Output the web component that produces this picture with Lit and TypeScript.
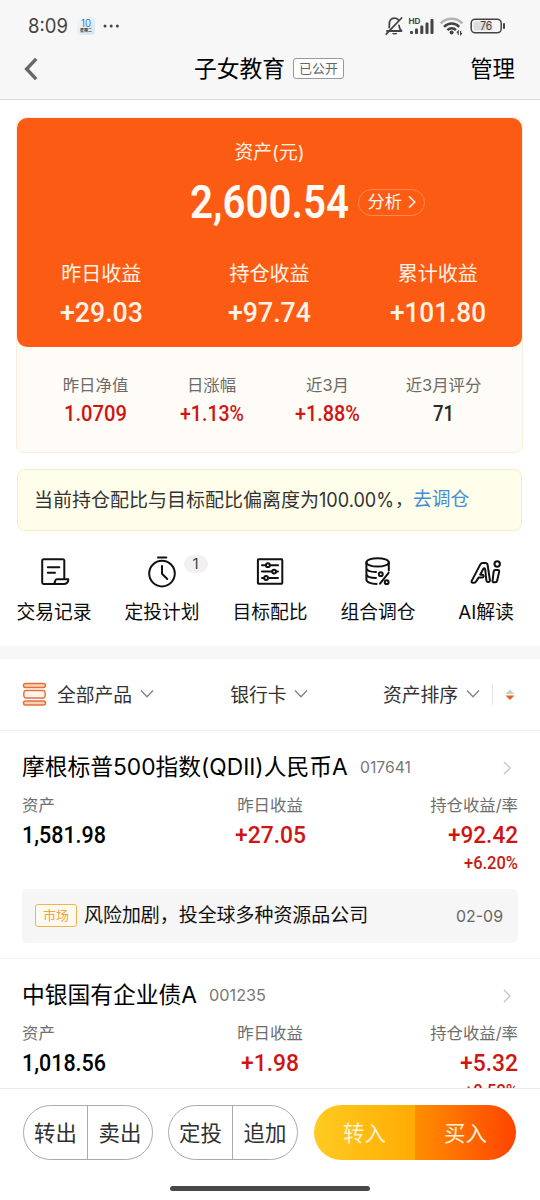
import { LitElement, html, svg, css } from "lit";
import { customElement, property } from "lit/decorators.js";

/** A figure set to an exact width, with its capitals centred in the box. */
@customElement("fit-figure")
class FitFigure extends LitElement {
  @property() text = "";
  @property({ type: Number }) w = 50;
  @property({ type: Number }) size = 20;
  @property() face = "din";

  static styles = css`
    :host { display: block; flex: none; line-height: 0; }
    svg { display: block; overflow: visible; fill: currentColor; }
    .din { font-family: Roboto, "Liberation Sans", sans-serif; font-weight: 500; }
    .bold { font-family: Roboto, "Liberation Sans", sans-serif; font-weight: 600; }
    .round { font-family: Inter, "Noto Sans", sans-serif; font-weight: 400; }
  `;

  render() {
    const h = Math.round(this.size * 0.8);
    return html`<svg width=${this.w} height=${h}>
      <text class=${this.face} x="0" y=${h / 2 + this.size * 0.358} font-size=${this.size}
        textLength=${this.w} lengthAdjust="spacingAndGlyphs">${this.text}</text>
    </svg>`;
  }
}

const fig = (text: string, w: number, size: number, face = "din") =>
  html`<fit-figure .text=${text} .w=${w} .size=${size} .face=${face}></fit-figure>`;

const icons = {
  records: svg`
    <path d="M5.6 28 A1.6 1.6 0 0 1 4.2 26.4 V4.6 A1.3 1.3 0 0 1 5.5 3.3 H25 A1.3 1.3 0 0 1 26.3 4.6 V22.8 M5.6 28 H25.5 C28.6 28 30.3 26.3 30.3 23.2 H18.6 C17.6 23.2 17.4 24 17.2 25 C16.9 26.8 16 28 14.6 28"/>
    <path d="M9.8 11.3H21.3M9.8 16.8H17"/>`,
  clock: svg`<circle cx="16" cy="17.6" r="12.8"/><path d="M12 1.4H20.3M16 10V17.8L21.3 23"/>`,
  sliders: svg`
    <rect x="3.9" y="3.3" width="24.4" height="24.4" rx=".6"/>
    <path d="M8 9.2H11.8M16 9.2H24M8 15.6H18M22.2 15.6H24M8 22H10M14.2 22H24"/>
    <circle cx="13.9" cy="9.2" r="1.9"/><circle cx="20.1" cy="15.6" r="1.9"/><circle cx="12.1" cy="22" r="1.9"/>`,
  coins: svg`
    <ellipse cx="15.6" cy="6.4" rx="11.2" ry="4.2"/>
    <path d="M4.4 6.4V23.6C4.4 26 8.5 28 14.6 28.1M26.8 6.4V14.6M4.4 12C4.6 14.6 9 16 14 16M4.4 17.8C4.6 20.4 9 21.9 14 21.9M26.6 16.8L18 27.6"/>
    <circle cx="18.8" cy="18.2" r="1.9"/><circle cx="24.7" cy="26.2" r="1.9"/>`,
  ai: svg`
    <path d="M1.7 24.9 L10.2 8.6 C10.8 7.4 11.6 6.9 12.8 6.9 H15.4 C16.8 6.9 17.4 7.6 17.6 8.8 L19.9 24.2 C20.1 26.4 16.8 26.6 16.4 24.6 L15.2 13.3 C15 11.8 13.9 11.8 13.2 13 L10.2 18.7 H12.2 C14 18.7 14.1 21.6 12.2 21.6 H8.6 L6.3 25.3 C5.7 26.4 5 26.7 4 26.7 H2.8 C1.7 26.7 1.2 25.9 1.7 24.9Z"/>
    <circle cx="27.2" cy="8" r="2.7"/>
    <path d="M25.2 13.9H27.5C28.9 13.9 29.4 14.6 29.1 15.9L27.2 24.5C26.9 25.8 26.4 26.3 25.2 26.3H24.2C22.8 26.3 22.3 25.6 22.6 24.3L23.7 15.4C23.9 14.4 24.3 13.9 25.2 13.9Z"/>`,
};

interface Fund {
  name: string;
  code: string;
  codeW: number;
  asset: string;
  day: string;
  dayW: number;
  hold: string;
  holdW: number;
  rate: string;
}

const funds: Fund[] = [
  { name: "摩根标普500指数(QDII)人民币A", code: "017641", codeW: 51, asset: "1,581.98", day: "+27.05", dayW: 71, hold: "+92.42", holdW: 70, rate: "+6.20%" },
  { name: "中银国有企业债A", code: "001235", codeW: 57, asset: "1,018.56", day: "+1.98", dayW: 58, hold: "+5.32", holdW: 58, rate: "+0.52%" },
];

@customElement("app-root")
class AppRoot extends LitElement {
  static styles = css`
    :host {
      display: block;
      width: 540px;
      height: 1200px;
      overflow: hidden;
      background: #fff;
      color: #111;
      font-family: Inter, "Noto Sans CJK SC", sans-serif;
      font-size: 18.8px;
      line-height: 1;
      white-space: nowrap;
    }
    * { box-sizing: border-box; }
    svg { display: block; flex: none; }
    .page { display: flex; flex-direction: column; height: 1200px; }
    .head { height: 100px; flex: none; background: #f7f7f7; border-bottom: 1.5px solid #dcdcdc; }
    .status { display: flex; align-items: center; height: 52px; padding: 0 34px 0 28px; color: #444; }
    .cal { display: flex; flex-direction: column; align-items: center; justify-content: space-evenly; width: 18px; height: 18px; margin: 0 8px 0 9px; border-radius: 4px; background: linear-gradient(135deg, #f3f8fc, #d5e5f0); color: #3a78bd; }
    .cal-day { font-size: 4px; font-weight: 700; color: #333; }
    .signals { display: flex; align-items: center; margin-left: auto; }
    .nav { display: grid; grid-template-columns: 1fr auto 1fr; align-items: center; height: 34px; padding: 0 25px 0 23px; color: #000; }
    .title { display: flex; align-items: center; gap: 8px; font-size: 22.8px; }
    .open { padding: 0 5px; height: 21px; line-height: 18px; border: 1px solid #999; border-radius: 3px; background: #fff; color: #666; font-size: 13px; }
    .manage { justify-self: end; font-size: 22.4px; }

    .card { flex: none; margin: 17px 17px 0 16px; height: 336px; border: 1px solid #fbeedd; border-radius: 8px; background: #fffbf6; }
    .hero { height: 229px; border-radius: 10px; background: #fc5b14; color: #fff3e6; }
    .hero-label { height: 65px; line-height: 69px; text-align: center; font-size: 18.8px; }
    .hero-amount { display: grid; grid-template-columns: 1fr 160px 1fr; align-items: center; height: 35px; color: #fffaf3; }
    .amount { grid-column: 2; }
    .analyse { display: flex; align-items: center; justify-self: start; gap: 6px; width: 67px; height: 27px; margin: 2px 0 0 8px; padding: 0 0 2px 9px; border: 1px solid #fd8a52; border-radius: 14px; font-size: 17.2px; }
    .gains { display: grid; grid-template-columns: repeat(3, 1fr); padding-top: 41px; }
    .cell { display: flex; flex-direction: column; align-items: center; }
    .gain-label { height: 30px; line-height: 30px; font-size: 20px; margin-bottom: 11px; }
    .stats { display: grid; grid-template-columns: repeat(4, 116px); justify-content: center; padding-top: 28px; }
    .stat-label { height: 20px; line-height: 20px; margin-bottom: 9px; color: #6d6a67; font-size: 16.4px; }
    .red { color: #cf1512; }
    .dark { color: #292929; }

    .notice { flex: none; display: flex; align-items: center; height: 62px; margin: 16px 18px 0 17px; padding-left: 16px; border: 1.5px solid #f3eec0; border-radius: 8px; background: #fffeea; color: #333; font-size: 19px; }
    .link { color: #458bdb; font-size: 18.8px; padding-top: 1px; }
    .notice-comma { font-size: 18px; margin-left: 1px; }

    .actions { flex: none; display: grid; grid-template-columns: repeat(5, 108px); height: 115px; padding-top: 25px; color: #0c0c0c; }
    .action { position: relative; display: flex; flex-direction: column; align-items: center; }
    .action-label { height: 20px; line-height: 20px; margin-top: 15px; }
    .glyph { fill: none; stroke: #111; stroke-width: 2; stroke-linecap: round; stroke-linejoin: round; }
    .badge { position: absolute; left: 75.5px; top: -1px; width: 24px; height: 18px; border-radius: 9px; background: #f1f1f1; color: #444; font-size: 15px; line-height: 18px; text-align: center; }
    .band { flex: none; height: 13px; background: #f7f7f7; }

    .filters { flex: none; display: flex; align-items: center; height: 72px; padding: 0 25px 0 22px; border-bottom: 1px solid #efefef; color: #333; }
    .filter { display: flex; align-items: center; gap: 8px; }
    .filter span { padding-top: 4px; }
    .all { margin-left: 10px; }
    .bank { margin-left: 76px; }
    .sort { margin-left: auto; }
    .rule { width: 1px; height: 21px; margin: 0 12px; background: #e4e4e4; }

    .list { flex: 1; min-height: 0; overflow: hidden; }
    .fund { padding: 17px 22px 0; }
    .fund-head { display: flex; align-items: center; height: 38px; padding-top: 1px; color: #000; font-size: 22.75px; }
    .code { margin-left: 12px; color: #777; }
    .more { margin-left: auto; margin-right: 7px; }
    .cols { display: grid; grid-template-columns: 150px 1fr 150px; }
    .mid { display: flex; flex-direction: column; align-items: center; }
    .end { display: flex; flex-direction: column; align-items: flex-end; }
    .sub { height: 37px; line-height: 38px; color: #6e6e6e; font-size: 16.4px; }
    .val { display: flex; align-items: center; height: 22px; color: #000; }
    .val.red { color: #cf1512; }
    .rate { display: flex; align-items: center; height: 34px; color: #c81a16; }
    .news { display: flex; align-items: center; height: 54px; margin-top: 10px; padding: 0 15px 0 13px; border-radius: 5px; background: #f6f6f6; font-size: 18.95px; }
    .news-text { padding-top: 1px; }
    .tag { width: 42px; height: 23px; margin: 0 7px 1px 0; border: 1px solid #efb352; border-radius: 3px; background: #fffaf0; color: #eda63a; font-size: 13px; line-height: 20px; text-align: center; }
    .date { margin-left: auto; color: #666; }
    .gap { height: 16px; margin: 0 -22px; border-bottom: 1px solid #f3f3f3; }

    .foot { flex: none; display: flex; flex-direction: column; align-items: center; height: 112px; border-top: 1px solid #ececec; background: #fff; }
    .buttons { display: flex; width: 540px; height: 55px; margin-top: 16px; padding-left: 23px; }
    .pair { display: grid; grid-template-columns: 1fr 1fr; width: 130px; height: 55px; margin-right: 15px; border: 1px solid #aaa; border-radius: 28px; overflow: hidden; color: #303030; font-size: 21.4px; line-height: 54px; text-align: center; }
    .first { border-right: 1px solid #aaa; }
    .solid { width: 202px; margin: 0 0 0 1px; border: 0; color: #fff2d8; line-height: 56px; }
    .in { background: linear-gradient(90deg, #ffcb22, #ffab02); }
    .buy { background: linear-gradient(90deg, #ff8e00, #ff4400); }
    .homebar { width: 200px; height: 5px; margin-top: 26px; border-radius: 3px; background: #484848; }
  `;

  private caret() {
    return html`<svg width="14" height="10" fill="none" stroke="#808080" stroke-width="1.3"><path d="M1 1.5L7 7.8L13 1.5" /></svg>`;
  }

  private action(icon: unknown, label: string, badge = "") {
    return html`<div class="action">
      <svg class="glyph" width="32" height="32">${icon}</svg>
      <div class="action-label">${label}</div>
      ${badge ? html`<span class="badge">${badge}</span>` : ""}
    </div>`;
  }

  private gain(label: string, value: string, w: number) {
    return html`<div class="cell"><div class="gain-label">${label}</div>${fig(value, w, 28.5)}</div>`;
  }

  private stat(label: string, value: string, w: number, tone: string) {
    return html`<div class="cell"><div class="stat-label">${label}</div><div class=${tone}>${fig(value, w, 22.5)}</div></div>`;
  }

  private fund(f: Fund, news = false) {
    return html`<section class="fund">
      <div class="fund-head">
        <span>${f.name}</span>
        <span class="code">${fig(f.code, f.codeW, 16.5, "round")}</span>
        <svg class="more" width="8" height="14" fill="none" stroke="#c4c4c4" stroke-width="1.3"><path d="M1 1L7 7L1 13" /></svg>
      </div>
      <div class="cols">
        <div><div class="sub">资产</div><div class="val">${fig(f.asset, 84, 24.5)}</div></div>
        <div class="mid"><div class="sub">昨日收益</div><div class="val red">${fig(f.day, f.dayW, 24.5)}</div></div>
        <div class="end">
          <div class="sub">持仓收益/率</div>
          <div class="val red">${fig(f.hold, f.holdW, 24.5)}</div>
          <div class="rate">${fig(f.rate, 54, 18.5)}</div>
        </div>
      </div>
      ${news
        ? html`<div class="news"><span class="tag">市场</span><span class="news-text">风险加剧，投全球多种资源品公司</span><span class="date">${fig("02-09", 47, 16.5, "round")}</span></div>
            <div class="gap"></div>`
        : ""}
    </section>`;
  }

  render() {
    return html`<div class="page">
      <header class="head">
        <div class="status">
          ${fig("8:09", 40, 19.5, "round")}
          <div class="cal">${fig("10", 10, 10, "round")}<span class="cal-day">星期二</span></div>
          <svg width="16" height="4" fill="#444"><circle cx="2" cy="2" r="1.5" /><circle cx="8.2" cy="2" r="1.5" /><circle cx="14.4" cy="2" r="1.5" /></svg>
          <div class="signals">
            <svg width="122" height="24" viewBox="385 14 122 24">
              <g fill="none" stroke="#444" stroke-width="1.8" stroke-linecap="round" stroke-linejoin="round">
                <path d="M388 31H402.5C400.8 29.4 400.2 27.5 400 25.5M390.2 27.6C390.6 25.5 389.6 22 391.4 20C393.6 17.6 397 17.6 399 19.5M402.6 18L387.2 34.2" />
              </g>
              <path d="M393 33H398.4A2.8 2.2 0 0 1 393 33Z" fill="#444" />
              <text x="409.5" y="24" font-size="7.5" font-weight="700" font-family="Inter" fill="#444" textLength="12" lengthAdjust="spacingAndGlyphs">HD</text>
              <g fill="#444">
                <rect x="411" y="31" width="3" height="3" rx="1" /><rect x="416" y="28.6" width="3" height="5.4" rx="1" />
                <rect x="421.3" y="25.6" width="3" height="8.4" rx="1" /><rect x="426.5" y="22.4" width="3" height="11.6" rx="1" /><rect x="431.5" y="19" width="3" height="15" rx="1" />
              </g>
              <g fill="none" stroke-width="2.4">
                <path d="M441.6 23.4C448 17.2 457.4 17.2 463.4 23.4" stroke="#b4b4b4" />
                <path d="M445 26.8C449.6 22.4 456 22.4 460.2 26.8M448.4 30.1C451 27.6 454.6 27.6 457 30.1" stroke="#444" />
              </g>
              <circle cx="452.6" cy="32.6" r="2" fill="#444" />
              <path d="M459.2 34.8V31.2L457.8 32.6M461.6 31V34.6L463 33.2" fill="none" stroke="#444" stroke-width="1.2" />
              <rect x="472.2" y="19.2" width="30" height="13.6" rx="4" fill="none" stroke="#444" stroke-width="1.5" />
              <rect x="474.5" y="21.5" width="19" height="9" rx="2" fill="#ddd" />
              <path d="M505 24V28" stroke="#444" stroke-width="2" stroke-linecap="round" />
              <text x="481.2" y="30" font-size="11.5" font-family="Inter" fill="#444" textLength="12" lengthAdjust="spacingAndGlyphs">76</text>
            </svg>
          </div>
        </div>
        <nav class="nav">
          <svg width="16" height="24" fill="none" stroke="#686868" stroke-width="3.4"><path d="M13.2 1.8L3.6 12L13.2 22.2" /></svg>
          <div class="title"><span>子女教育</span><span class="open">已公开</span></div>
          <span class="manage">管理</span>
        </nav>
      </header>

      <section class="card">
        <div class="hero">
          <div class="hero-label">资产(元)</div>
          <div class="hero-amount">
            <div class="amount">${fig("2,600.54", 159, 46, "bold")}</div>
            <div class="analyse"><span>分析</span><svg width="8" height="14" fill="none" stroke="#fff3e6" stroke-width="1.6"><path d="M1 1.4L6.8 7L1 12.6" /></svg></div>
          </div>
          <div class="gains">
            ${this.gain("昨日收益", "+29.03", 83)}${this.gain("持仓收益", "+97.74", 83)}${this.gain("累计收益", "+101.80", 96)}
          </div>
        </div>
        <div class="stats">
          ${this.stat("昨日净值", "1.0709", 63, "red")}${this.stat("日涨幅", "+1.13%", 64, "red")}
          ${this.stat("近3月", "+1.88%", 65, "red")}${this.stat("近3月评分", "71", 21, "dark")}
        </div>
      </section>

      <div class="notice">
        <span>当前持仓配比与目标配比偏离度为</span>${fig("100.00%", 75, 19.5, "round")}<span class="notice-comma">，</span><span class="link">去调仓</span>
      </div>

      <section class="actions">
        ${this.action(icons.records, "交易记录")}${this.action(icons.clock, "定投计划", "1")}
        ${this.action(icons.sliders, "目标配比")}${this.action(icons.coins, "组合调仓")}${this.action(icons.ai, "AI解读")}
      </section>
      <div class="band"></div>

      <div class="filters">
        <svg width="25" height="25" fill="#fff5ee" stroke="#e2703a" stroke-width="1.5">
          <rect x="1.5" y="1.5" width="22" height="4" rx="2" fill="#fbd0b4" /><rect x="1.5" y="19" width="22" height="4" rx="2" fill="#fbd0b4" />
          <path d="M4 8.5H21C23 8.5 23.2 9.5 23.2 12.2S23 16 21 16H4C2 16 1.8 15 1.8 12.2S2 8.5 4 8.5Z" />
        </svg>
        <div class="filter all"><span>全部产品</span>${this.caret()}</div>
        <div class="filter bank"><span>银行卡</span>${this.caret()}</div>
        <div class="filter sort"><span>资产排序</span>${this.caret()}</div>
        <i class="rule"></i>
        <svg width="10" height="12"><path d="M5 .5L9.5 5H.5Z" fill="#ccc" /><path d="M.5 6.5H9.5L5 11Z" fill="#e4602a" /></svg>
      </div>

      <main class="list">${this.fund(funds[0], true)}${this.fund(funds[1])}</main>

      <footer class="foot">
        <div class="buttons">
          <div class="pair"><span class="first">转出</span><span>卖出</span></div>
          <div class="pair"><span class="first">定投</span><span>追加</span></div>
          <div class="pair solid"><span class="in">转入</span><span class="buy">买入</span></div>
        </div>
        <div class="homebar"></div>
      </footer>
    </div>`;
  }
}
